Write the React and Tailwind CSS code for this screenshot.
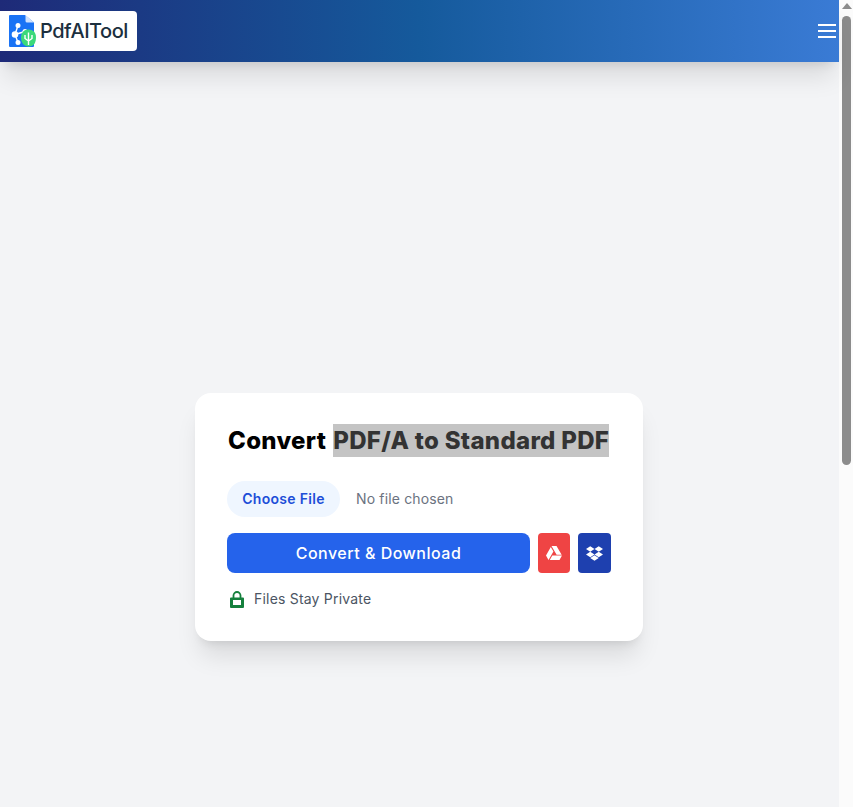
import { FaDropbox, FaGoogleDrive } from "react-icons/fa";

const fontStack = "font-['Inter','Liberation_Sans',sans-serif]";

function Logo() {
    return (
        <div className="flex h-10 w-[137px] items-center rounded-r bg-white pl-[9px]">
            <svg width="28" height="33" viewBox="0 0 28 33" className="shrink-0">
                <path d="M1 0H16L25 7.500V31a1 1 0 0 1-1 1H1a1 1 0 0 1-1-1V1a1 1 0 0 1 1-1z" fill="#1a73f5" />
                <path d="M16.500 0L25 7.500H18a1.500 1.500 0 0 1-1.500-1.500z" fill="#cfe1fd" />
                <g stroke="#fff" strokeWidth="1.400" fill="#fff">
                    <path d="M6 19.500L9 10.500M6 19.500L16 16.500M6 19.500L9 27.500" fill="none" />
                    <circle cx="6" cy="19.500" r="2.600" />
                    <circle cx="9" cy="10.500" r="1.800" />
                    <circle cx="16" cy="16.500" r="1.800" />
                    <circle cx="9" cy="27.500" r="1.800" />
                </g>
                <path d="M19.500 14.500c4.500 0 7.500 3 7.500 7.500c0 5-1.500 9.500-7.500 9.500c-4.500 0-7.500-4-7.500-9c0-4.500 3-8 7.500-8z" fill="#3bd97a" />
                <path d="M19.500 17.500V30M16 20V23.500L19.500 26M23 20V23.500L19.500 26" stroke="#fff" strokeWidth="1.400" fill="none" />
            </svg>
            <span className="ml-[3px] text-[20px] font-medium tracking-[-0.5px] text-[#1c2f3e]">
                PdfAITool
            </span>
        </div>
    );
}

function Header() {
    return (
        <header className="relative flex h-[62px] items-center justify-between bg-[linear-gradient(90deg,#1e2a78_0%,#155a9c_50%,#3a7bd5_100%)] pr-[3px] shadow-xl">
            <Logo />
            <button className="flex w-[18px] flex-col gap-1">
                <span className="h-0.5 w-full bg-white" />
                <span className="h-0.5 w-full bg-white" />
                <span className="h-0.5 w-full bg-white" />
            </button>
        </header>
    );
}

function Card() {
    return (
        <div className="w-[448px] rounded-2xl bg-white p-8 shadow-xl">
            <h1 className="mb-6 text-2xl leading-8 font-extrabold tracking-[0.3px] whitespace-nowrap text-black">
                <span className="mr-[1.500px] ml-px">Convert</span>{" "}
                <span className="bg-[#c4c4c4] pt-0.5 pb-0.5 text-[#333333]">PDF/A to Standard PDF</span>
            </h1>

            <div className="flex items-center">
                <button className="flex h-9 w-[113px] items-center justify-center rounded-full bg-[#eff6ff] text-sm font-semibold tracking-[0.3px] text-[#1d4ed8]">
                    Choose File
                </button>
                <span className="ml-4 text-sm tracking-[0.15px] text-[#6b7280]">No file chosen</span>
            </div>

            <div className="mt-4 flex gap-2">
                <button className="h-10 w-[303px] rounded-lg bg-[#2563eb] pb-px text-base font-medium tracking-[0.5px] text-white">
                    Convert &amp; Download
                </button>
                <button className="flex h-10 w-8 items-center justify-center rounded bg-[#ef4444] text-white">
                    <FaGoogleDrive size={16} />
                </button>
                <button className="flex h-10 w-[33px] items-center justify-center rounded bg-[#1e40af] text-white">
                    <FaDropbox size={17} />
                </button>
            </div>

            <div className="mt-4 flex h-5 items-center pl-[3px]">
                <svg width="14" height="17" viewBox="0 0 14 17" className="shrink-0">
                    <path d="M3.500 7V4.500a3.500 3.500 0 0 1 7 0V7" fill="none" stroke="#15803d" strokeWidth="1.800" />
                    <path fillRule="evenodd" d="M1 6.500h12a1 1 0 0 1 1 1V16a1 1 0 0 1-1 1H1a1 1 0 0 1-1-1V7.500a1 1 0 0 1 1-1zM3 9v5h8V9z" fill="#15803d" />
                </svg>
                <span className="ml-[10px] text-sm tracking-[0.2px] text-[#4b5563]">Files Stay Private</span>
            </div>
        </div>
    );
}

function Scrollbar() {
    return (
        <div className="flex w-3.5 shrink-0 flex-col items-center bg-[#fbfbfb] pt-[3px] pl-px">
            <div className="h-0 w-0 border-x-[5px] border-b-[6px] border-x-transparent border-b-[#8c8c8c]" />
            <div className="mt-[7px] h-[449px] w-[9px] rounded-full bg-[#8c8c8c]" />
        </div>
    );
}

export default function App() {
    return (
        <div className={`flex h-screen overflow-hidden bg-[#f3f4f6] ${fontStack}`}>
            <div className="min-w-0 flex-1">
                <Header />
                <main className="flex justify-center pt-[331px] pr-px">
                    <Card />
                </main>
            </div>
            <Scrollbar />
        </div>
    );
}
